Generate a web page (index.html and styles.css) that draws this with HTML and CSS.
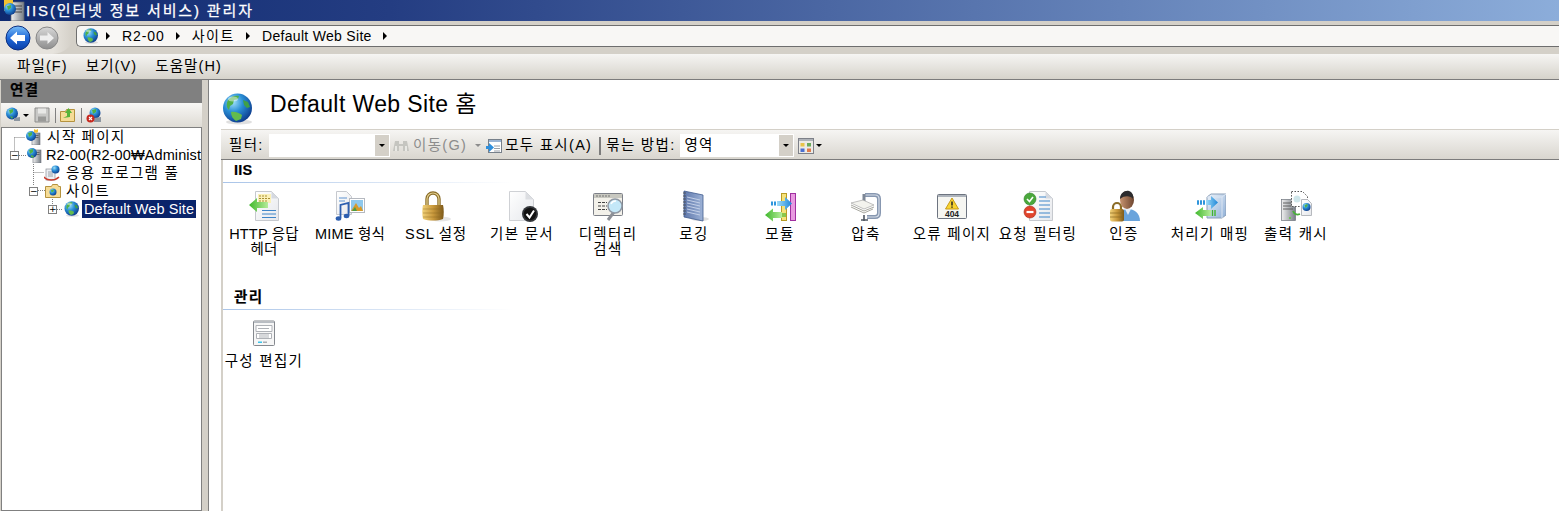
FILE: index.html
```html
<!DOCTYPE html>
<html lang="ko">
<head>
<meta charset="utf-8">
<title>IIS(인터넷 정보 서비스) 관리자</title>
<link rel="stylesheet" href="styles.css">
</head>
<body>
<svg class="defs" width="0" height="0" aria-hidden="true">
  <defs>
    <radialGradient id="gGlobe" cx="35%" cy="30%" r="75%"><stop offset="0" stop-color="#9fe0f8"/><stop offset=".45" stop-color="#2a8fd6"/><stop offset="1" stop-color="#0c3a8c"/></radialGradient>
    <linearGradient id="gPage" x1="0" y1="0" x2="1" y2="1"><stop offset="0" stop-color="#ffffff"/><stop offset="1" stop-color="#e6e8ec"/></linearGradient>
    <linearGradient id="gGold" x1="0" y1="0" x2="1" y2="0"><stop offset="0" stop-color="#f2d27a"/><stop offset=".5" stop-color="#c9993c"/><stop offset="1" stop-color="#7e5a1a"/></linearGradient>
    <linearGradient id="gBlueArrow" x1="0" y1="0" x2="1" y2="0"><stop offset="0" stop-color="#9fdcf8"/><stop offset="1" stop-color="#1d86d8"/></linearGradient>
    <linearGradient id="gGreenArrow" x1="0" y1="0" x2="1" y2="0"><stop offset="0" stop-color="#3fb82c"/><stop offset="1" stop-color="#b6ec9a"/></linearGradient>
    <linearGradient id="gBack" x1="0" y1="0" x2="0" y2="1"><stop offset="0" stop-color="#7cc0f8"/><stop offset=".5" stop-color="#1f68d8"/><stop offset="1" stop-color="#0a3ea8"/></linearGradient>
    <linearGradient id="gFwd" x1="0" y1="0" x2="0" y2="1"><stop offset="0" stop-color="#d8d8d8"/><stop offset="1" stop-color="#8e8e8e"/></linearGradient>
    <linearGradient id="gBook" x1="0" y1="0" x2="1" y2="0"><stop offset="0" stop-color="#5f78ac"/><stop offset="1" stop-color="#9db2d6"/></linearGradient>
    <linearGradient id="gBox" x1="0" y1="0" x2="1" y2="1"><stop offset="0" stop-color="#eef4fb"/><stop offset="1" stop-color="#8fb0d8"/></linearGradient>
    <linearGradient id="gServer" x1="0" y1="0" x2="1" y2="0"><stop offset="0" stop-color="#f0f0f0"/><stop offset="1" stop-color="#777e86"/></linearGradient>
    <linearGradient id="gSkin" x1="0" y1="0" x2="1" y2="0"><stop offset="0" stop-color="#c89470"/><stop offset="1" stop-color="#6e4630"/></linearGradient>

    <symbol id="i-globe" viewBox="0 0 32 32">
      <ellipse cx="17" cy="29" rx="13" ry="2.5" fill="#000" opacity=".12"/>
      <circle cx="15.500" cy="15" r="14.500" fill="url(#gGlobe)"/>
      <path d="M7 6c3-3 7-4 10-3l-1 3-4 1-1 4-3 2-1 4c-3-2-3-8 0-11z" fill="#4fb04a"/>
      <path d="M9 19c4-1 8 1 11 3l-1 4-5 2c-3-2-5-5-5-9z" fill="#63bb4d"/>
      <path d="M21 7l5 2 2 5-3 1-3-3z" fill="#3f9f48"/>
      <ellipse cx="11" cy="6" rx="5" ry="2.500" fill="#fff" opacity=".45"/>
    </symbol>
    <symbol id="i-server" viewBox="0 0 16 16">
      <rect x="7" y="3" width="8" height="13" fill="url(#gServer)" stroke="#6e747c" stroke-width=".6"/>
      <path d="M8.500 5.500h5M8.500 7.500h5" stroke="#555" stroke-width=".8"/>
      <circle cx="6" cy="6" r="5" fill="url(#gGlobe)"/>
      <path d="M3 3l4-1 0 3-3 2zM5 8l3 1-1 2-2-1z" fill="#4fb04a"/>
    </symbol>
    <symbol id="i-start" viewBox="0 0 16 16">
      <rect x="7" y="4" width="8" height="12" fill="url(#gServer)" stroke="#6e747c" stroke-width=".6"/>
      <path d="M8.500 6.500h5M8.500 8.500h5" stroke="#555" stroke-width=".8"/>
      <circle cx="6" cy="7" r="5" fill="url(#gGlobe)"/>
      <path d="M3 4l4-1 0 3-3 2z" fill="#4fb04a"/>
      <path d="M9 0l2 1 2-1v3l-2 1-2-1z" fill="#f4c430"/>
    </symbol>
    <symbol id="i-pool" viewBox="0 0 16 16">
      <rect x="2" y="4" width="9" height="11" fill="#eceff3" stroke="#8c8f96" stroke-width=".7"/>
      <path d="M4 7h5M4 9h5M4 11h5" stroke="#9aa0a8"/>
      <circle cx="11.500" cy="4.500" r="4" fill="url(#gGlobe)"/>
      <path d="M0 12c3 4 11 4 15 0" fill="none" stroke="#c93a2c" stroke-width="1.500"/>
    </symbol>
    <symbol id="i-folder" viewBox="0 0 16 16">
      <path d="M.5 3.500h6l1-2h5l1 2h2v11H.5z" fill="#f6dc96" stroke="#b5923e"/>
      <circle cx="8" cy="9" r="3.500" fill="url(#gGlobe)"/>
      <path d="M6 7l3-.5-.5 2-2 1z" fill="#4fb04a"/>
    </symbol>
    <symbol id="i-http" viewBox="0 0 32 32">
      <path d="M7.500 1.500h16l7 7v22h-23z" fill="url(#gPage)" stroke="#c6c9ce"/>
      <path d="M23.500 1.500v7h7z" fill="#d5d9e0"/>
      <rect x="10" y="4" width="13" height="9" fill="#fbf1b8"/>
      <path d="M11 6h9M11 8.500h11M11 11h8" stroke="#a99034" stroke-dasharray="2 1"/>
      <path d="M14 20.500h14M14 24h14M14 27.500h14" stroke="#3f86c9"/>
      <path d="M1 15l8-7v4h11v6H9v4z" fill="url(#gGreenArrow)"/>
    </symbol>
    <symbol id="i-mime" viewBox="0 0 32 32">
      <path d="M2.500 1.500h10l5 5v18h-15z" fill="url(#gPage)" stroke="#c6c9ce"/>
      <path d="M5 8h8M5 11h6" stroke="#5e93cf"/>
      <rect x="15.500" y="8.500" width="15" height="14" fill="#fff" stroke="#b5b9c0"/>
      <rect x="17" y="10" width="12" height="11" fill="#8ec8ec"/>
      <path d="M17 21l5-8 3 5 2-2 2 5z" fill="#d89a2a"/>
      <path d="M18 21l3-4 2 4z" fill="#4a9c44"/>
      <path d="M6.500 28V15l8-2v13" fill="none" stroke="#2d5fb0" stroke-width="1.800"/>
      <ellipse cx="4.500" cy="28.500" rx="2.800" ry="2.200" fill="#2d5fb0"/>
      <ellipse cx="12.500" cy="26" rx="2.800" ry="2.200" fill="#2d5fb0"/>
    </symbol>
    <symbol id="i-lock" viewBox="0 0 32 32">
      <ellipse cx="20" cy="29" rx="11" ry="2.500" fill="#000" opacity=".1"/>
      <g transform="translate(-3 1)">
        <path d="M10 15V8a6 6 0 0 1 12 0v7" fill="none" stroke="#8a6c28" stroke-width="3.400"/>
        <path d="M10 15V8a6 6 0 0 1 12 0v7" fill="none" stroke="#e3cf8e" stroke-width="1.200"/>
        <path d="M6 14h20c1 4 1 10 0 14-6 2-14 2-20 0-1-4-1-10 0-14z" fill="url(#gGold)"/>
        <path d="M6 18h20M6 22h20M6 26h20" stroke="#8a6820" stroke-width=".7" opacity=".6"/>
      </g>
    </symbol>
    <symbol id="i-doc" viewBox="0 0 32 32">
      <path d="M3.500 1.500h16l8 8v21h-24z" fill="url(#gPage)" stroke="#cfd1d5"/>
      <path d="M19.500 1.500v8h8z" fill="#dcdee2"/>
      <circle cx="24" cy="24" r="8" fill="#33363a"/>
      <circle cx="24" cy="24" r="6.200" fill="#111"/>
      <path d="M20.500 24l3 3.500 4.500-7" fill="none" stroke="#fff" stroke-width="2"/>
    </symbol>
    <symbol id="i-dir" viewBox="0 0 32 32">
      <rect x="1.500" y="3.500" width="29" height="22" rx="1" fill="#f3f1ea" stroke="#7d8088"/>
      <rect x="2" y="4" width="28" height="4" fill="#c8c8c0"/>
      <path d="M4 6h14" stroke="#777" stroke-dasharray="2 1"/>
      <path d="M6 12.500h9M6 16h9M6 19.500h9" stroke="#444" stroke-dasharray="3 1"/>
      <path d="M16 30l6-8" stroke="#8c8f96" stroke-width="3"/>
      <circle cx="23" cy="16" r="7" fill="#c4e8f8" stroke="#8f98a4" stroke-width="1.500"/>
      <path d="M19 14a5 5 0 0 1 5-3" fill="none" stroke="#fff" stroke-width="1.500"/>
    </symbol>
    <symbol id="i-log" viewBox="0 0 32 32">
      <ellipse cx="22" cy="29" rx="9" ry="2" fill="#000" opacity=".12"/>
      <path d="M6 1l19 4v26L6 27z" fill="url(#gBook)" stroke="#3f5a8e" stroke-width=".8"/>
      <path d="M9 7l13 3M9 10l13 3M9 13l13 3M9 16l13 3M9 19l13 3M9 22l13 3" stroke="#c9d5ea" stroke-width=".9"/>
      <path d="M5 3h3M5 6h3M5 9h3M5 12h3M5 15h3M5 18h3M5 21h3M5 24h3" stroke="#50555e" stroke-width="1.100"/>
    </symbol>
    <symbol id="i-module" viewBox="0 0 32 32">
      <rect x="17.500" y="3.500" width="5" height="27" fill="#f6e27a" stroke="#b89b24"/>
      <rect x="26.500" y="3.500" width="5" height="27" fill="#e89ae0" stroke="#a02fa0"/>
      <path d="M7 13.500h2M10 13.500h2" stroke="#2f95dc" stroke-width="4"/>
      <path d="M13 11h8V7l7 6.500-7 6.500v-4h-8z" fill="url(#gBlueArrow)"/>
      <path d="M1 25l8-6.500V22h9v6H9v3.500z" fill="url(#gGreenArrow)"/>
      <path d="M19 23v4M21 23v4" stroke="#43b52e" stroke-width="1.200"/>
    </symbol>
    <symbol id="i-clamp" viewBox="0 0 32 32">
      <path d="M15 5h10q4 0 4 4v14q0 4-4 4h-8" fill="none" stroke="#8797b0" stroke-width="4"/>
      <path d="M15 5h10q4 0 4 4v14q0 4-4 4h-8" fill="none" stroke="#d5dde8" stroke-width="1.200"/>
      <path d="M14 4v8" stroke="#7d8796" stroke-width="3"/>
      <path d="M1 13l12-3 11 5-10 4z" fill="#f3f3ee" stroke="#999" stroke-width=".6"/>
      <path d="M1 15l13 6 10-4M1 17l13 6 9-4" fill="none" stroke="#a8a8a0" stroke-width="1"/>
      <path d="M14 25l0 6M11 30h7" stroke="#4e5560" stroke-width="1.600"/>
    </symbol>
    <symbol id="i-error" viewBox="0 0 32 32">
      <rect x="1.500" y="4.500" width="29" height="24" rx="1" fill="#f6f6f2" stroke="#6d7480"/>
      <rect x="2" y="5" width="28" height="2" fill="#aeb4bc"/>
      <path d="M16 8l6.500 11h-13z" fill="#f8d430" stroke="#c69a18"/>
      <path d="M16 11.500v4M16 16.500v1.200" stroke="#222" stroke-width="1.500"/>
      <text x="16" y="27" class="svg-404">404</text>
    </symbol>
    <symbol id="i-filter" viewBox="0 0 32 32">
      <path d="M7.500 1.500h16l7 7v22h-23z" fill="url(#gPage)" stroke="#c6c9ce"/>
      <path d="M23.500 1.500v7h7z" fill="#d5d9e0"/>
      <path d="M17 7h7M17 11h11M17 15h11M17 19h11M17 23h11M17 27h11" stroke="#3f86c9"/>
      <circle cx="8" cy="9" r="6" fill="#4aa83c" stroke="#2f7f28" stroke-width=".6"/>
      <path d="M5 9l2.500 2.500L11 7" fill="none" stroke="#fff" stroke-width="1.600"/>
      <circle cx="8" cy="22" r="6" fill="#e0442c" stroke="#a62a18" stroke-width=".6"/>
      <path d="M4.500 22h7" stroke="#fff" stroke-width="2.200"/>
    </symbol>
    <symbol id="i-auth" viewBox="0 0 32 32">
      <path d="M10 31c0-8 4-12 10-12s12 4 12 12z" fill="#6aa4dc"/>
      <path d="M17 19l3 6 3-6z" fill="#e6eef8"/>
      <ellipse cx="19" cy="10" rx="7" ry="9" fill="url(#gSkin)"/>
      <path d="M12 9c0-6 5-9 9-8 3 1 5 4 4 8-2-3-8-4-13 0z" fill="#2c2c2e"/>
      <path d="M5 20v-3a4 4 0 0 1 8 0v3" fill="none" stroke="#8a6c28" stroke-width="2.200"/>
      <rect x="2" y="19" width="14" height="12.500" rx="2" fill="url(#gGold)"/>
      <path d="M2 23h14M2 27h14" stroke="#8a6820" stroke-width=".7"/>
    </symbol>
    <symbol id="i-map" viewBox="0 0 32 32">
      <path d="M13 7l4-3h15v21l-4 3H13z" fill="url(#gBox)" stroke="#8ca0b8"/>
      <path d="M28 28V7l4-3M28 7H13" fill="none" stroke="#dbe5f2"/>
      <path d="M3 12.500h2M6 12.500h2M9 12.500h2" stroke="#2f95dc" stroke-width="4.500"/>
      <path d="M12 10h5V6l7 6.500-7 6.500v-4h-5z" fill="url(#gBlueArrow)"/>
      <path d="M1 23l8-6v3h8v6H9v3z" fill="url(#gGreenArrow)"/>
      <path d="M18.500 20v6M21 20v6" stroke="#43b52e" stroke-width="1.400"/>
    </symbol>
    <symbol id="i-cache" viewBox="0 0 32 32">
      <rect x="1.500" y="9.500" width="14" height="21" fill="url(#gServer)" stroke="#6e747c" stroke-width=".7"/>
      <path d="M3 13h10M3 16h10M3 19h10" stroke="#555" stroke-width=".9"/>
      <circle cx="10" cy="28" r="1" fill="#5fce3c"/>
      <path d="M11.500 1.500h11l5 5v10h-16z" fill="#fff" stroke="#555" stroke-dasharray="1.500 1.500"/>
      <circle cx="17" cy="9" r="3.500" fill="#cfe6ea"/>
      <path d="M21.500 9.500h6l4 4v12h-10z" fill="url(#gPage)" stroke="#b6b9be"/>
      <circle cx="26.500" cy="17" r="4" fill="url(#gGlobe)"/>
      <path d="M24.500 15l3-1 0 2-2 2z" fill="#4fb04a"/>
      <path d="M13 21q2 5 7 3" fill="none" stroke="#49b03a" stroke-width="1.800"/>
    </symbol>
    <symbol id="i-config" viewBox="0 0 32 32">
      <rect x="5.500" y="4" width="21" height="24.500" rx="1" fill="#f6f6f6" stroke="#85898f"/>
      <rect x="6" y="4.500" width="20" height="1.500" fill="#b7bcc2"/>
      <path d="M8 8.500h16v6H8zM8.500 16.500h15v5h-15z" fill="#fff" stroke="#aeb1b6"/>
      <path d="M10 11.500h11M11 18h10M11 20h10" stroke="#aeb1b6"/>
      <rect x="10" y="24.500" width="4" height="1.500" fill="#3cc4ea"/>
      <rect x="15" y="24.500" width="4" height="1.500" fill="#a8acb2"/>
    </symbol>
    <symbol id="i-save" viewBox="0 0 16 16">
      <path d="M1 1h14v14H1z" fill="#c8c8c6" stroke="#8e8e8c"/>
      <rect x="4" y="1.500" width="8" height="5" fill="#e8e8e6"/>
      <rect x="4" y="9.500" width="8" height="5" fill="#9a9a98"/>
    </symbol>
    <symbol id="i-up" viewBox="0 0 16 16">
      <path d="M.5 4.500h5l1-2h8v12H.5z" fill="#f6dc96" stroke="#b5923e"/>
      <path d="M3 11l4-2V6H5l3.500-5L12 6h-2v4z" fill="#58b43a"/>
    </symbol>
    <symbol id="i-disc" viewBox="0 0 16 16">
      <circle cx="9" cy="6" r="5.500" fill="url(#gGlobe)"/>
      <path d="M6 3l4-1 0 3-3 2z" fill="#4fb04a"/>
      <path d="M8 11l7-1v5H8z" fill="#8d96a0"/>
      <circle cx="4.500" cy="11.500" r="4" fill="#c6281e"/>
      <path d="M3 10l3 3M6 10l-3 3" stroke="#fff" stroke-width="1.100"/>
    </symbol>
    <symbol id="i-connect" viewBox="0 0 16 16">
      <circle cx="7" cy="6.500" r="6" fill="url(#gGlobe)"/>
      <path d="M4 3l4-1 0 3-3 2zM5 9l3 1-1 2z" fill="#4fb04a"/>
      <path d="M9 11l6-1v4H9z" fill="#8d96a0"/>
    </symbol>
    <symbol id="i-bino" viewBox="0 0 16 16">
      <path d="M2 3h4v3h4V3h4l2 10h-6V8H6v5H0z" fill="#c5c5c0"/>
      <path d="M3 13V8M13 13V8" stroke="#e8e8e4" stroke-width="2"/>
    </symbol>
    <symbol id="i-showall" viewBox="0 0 16 16">
      <rect x="2.500" y="1.500" width="13" height="13" fill="#fff" stroke="#77808a"/>
      <rect x="3" y="2" width="12" height="2" fill="#9ab4d4"/>
      <path d="M8 8h6M8 10.500h6M8 13h6" stroke="#9aa0a8"/>
      <path d="M0 8h3V5l5 4.500L3 14v-3H0z" fill="#2f8fdc"/>
    </symbol>
    <symbol id="i-view" viewBox="0 0 16 16">
      <rect x=".5" y=".5" width="15" height="15" fill="#ecebe6" stroke="#7d8088"/>
      <rect x="1" y="1" width="14" height="2" fill="#aeb2b8"/>
      <rect x="2.500" y="5" width="4" height="3.500" fill="#e8c44a"/>
      <rect x="9" y="5" width="4" height="3.500" fill="#6aaa5c"/>
      <rect x="2.500" y="10.500" width="4" height="3.500" fill="#4a6ed0"/>
      <rect x="9" y="10.500" width="4" height="3.500" fill="#e07a4a"/>
    </symbol>
  </defs>
</svg>

<header class="titlebar">
  <svg class="title-icon" viewBox="0 0 22 21">
    <rect x="8" y="2" width="13" height="19" fill="url(#gServer)" stroke="#5e646c" stroke-width=".7"/>
    <path d="M10 6h9M10 9h9M10 12h9" stroke="#444"/>
    <rect x="1" y="0" width="9" height="11" fill="#f2c230"/>
    <circle cx="7" cy="9" r="6" fill="url(#gGlobe)"/>
    <path d="M4 6l4-1v3l-3 2z" fill="#4fb04a"/>
  </svg>
  <span class="title-text">IIS(인터넷 정보 서비스) 관리자</span>
</header>

<nav class="navbar">
  <div class="nav-buttons">
    <svg class="nav-btn" viewBox="0 0 26 26">
      <circle cx="13" cy="13" r="12" fill="url(#gBack)" stroke="#0c2f80"/>
      <path d="M5 13l7-6.500V10h8v6h-8v3.500z" fill="#fff"/>
    </svg>
    <svg class="nav-btn nav-btn-off" viewBox="0 0 24 24">
      <circle cx="12" cy="12" r="11" fill="url(#gFwd)" stroke="#888"/>
      <path d="M19 12l-6.500-6V9.500H5v5h7.500V18z" fill="#eee"/>
    </svg>
  </div>
  <div class="address">
    <svg class="addr-globe"><use href="#i-globe"/></svg>
    <span class="crumb-arrow"></span>
    <span class="crumb crumb-host">R2-00</span>
    <span class="crumb-arrow"></span>
    <span class="crumb ko">사이트</span>
    <span class="crumb-arrow"></span>
    <span class="crumb">Default Web Site</span>
    <span class="crumb-arrow"></span>
  </div>
</nav>

<div class="menubar">
  <span class="menu-item">파일(F)</span>
  <span class="menu-item">보기(V)</span>
  <span class="menu-item">도움말(H)</span>
</div>

<main class="workspace">
  <aside class="connections">
    <div class="conn-head ko">연결</div>
    <div class="conn-tools">
      <svg class="tool"><use href="#i-connect"/></svg>
      <span class="caret caret-small"></span>
      <svg class="tool"><use href="#i-save"/></svg>
      <span class="tool-sep"></span>
      <svg class="tool"><use href="#i-up"/></svg>
      <span class="tool-sep"></span>
      <svg class="tool"><use href="#i-disc"/></svg>
    </div>
    <div class="tree">
      <svg class="tree-lines" width="80" height="100">
        <path d="M14.500 9.500v13M14.500 9.500H25M19 27.500h7M33.500 32v26M33.500 44.500H44M38 62.500h7M52.500 67v9M57 81.500h6" fill="none" stroke="#808080" stroke-dasharray="1 1"/>
      </svg>
      <div class="row row-start"><svg class="tree-icon"><use href="#i-start"/></svg><span class="ko">시작 페이지</span></div>
      <div class="row row-l0"><span class="exp">−</span><svg class="tree-icon"><use href="#i-server"/></svg><span class="clip">R2-00(R2-00₩Administrator)</span></div>
      <div class="row row-pool"><svg class="tree-icon"><use href="#i-pool"/></svg><span class="ko">응용 프로그램 풀</span></div>
      <div class="row row-l1"><span class="exp">−</span><svg class="tree-icon"><use href="#i-folder"/></svg><span class="ko">사이트</span></div>
      <div class="row row-l2"><span class="exp exp-plus">+</span><svg class="tree-icon"><use href="#i-globe"/></svg><span class="selected">Default Web Site</span></div>
    </div>
  </aside>

  <section class="content">
    <div class="page-head">
      <svg class="page-globe"><use href="#i-globe"/></svg>
      <h1 class="page-title">Default Web Site 홈</h1>
    </div>
    <div class="filterbar">
      <span class="fb-label ko">필터:</span>
      <span class="combo combo-filter"><span class="combo-val"></span><span class="combo-btn"><span class="caret"></span></span></span>
      <svg class="fb-icon"><use href="#i-bino"/></svg>
      <span class="fb-go ko">이동(G)</span>
      <span class="caret caret-dim"></span>
      <svg class="fb-icon fb-showall"><use href="#i-showall"/></svg>
      <span class="fb-text ko">모두 표시(A)</span>
      <span class="fb-sep"></span>
      <span class="fb-text ko">묶는 방법:</span>
      <span class="combo combo-group"><span class="combo-val ko">영역</span><span class="combo-btn"><span class="caret"></span></span></span>
      <svg class="fb-icon fb-view"><use href="#i-view"/></svg>
      <span class="caret caret-small"></span>
    </div>
    <div class="features">
      <h2 class="group-title">IIS</h2>
      <div class="group-rule"></div>
      <div class="items items-iis">
        <div class="item"><svg class="item-icon"><use href="#i-http"/></svg><span>HTTP 응답 헤더</span></div>
        <div class="item"><svg class="item-icon"><use href="#i-mime"/></svg><span>MIME 형식</span></div>
        <div class="item"><svg class="item-icon"><use href="#i-lock"/></svg><span class="mix">SSL 설정</span></div>
        <div class="item"><svg class="item-icon"><use href="#i-doc"/></svg><span class="ko">기본 문서</span></div>
        <div class="item"><svg class="item-icon"><use href="#i-dir"/></svg><span class="ko">디렉터리 검색</span></div>
        <div class="item"><svg class="item-icon"><use href="#i-log"/></svg><span class="ko">로깅</span></div>
        <div class="item"><svg class="item-icon"><use href="#i-module"/></svg><span class="ko">모듈</span></div>
        <div class="item"><svg class="item-icon"><use href="#i-clamp"/></svg><span class="ko">압축</span></div>
        <div class="item"><svg class="item-icon"><use href="#i-error"/></svg><span class="ko">오류 페이지</span></div>
        <div class="item"><svg class="item-icon"><use href="#i-filter"/></svg><span class="ko">요청 필터링</span></div>
        <div class="item"><svg class="item-icon"><use href="#i-auth"/></svg><span class="ko">인증</span></div>
        <div class="item"><svg class="item-icon"><use href="#i-map"/></svg><span class="ko">처리기 매핑</span></div>
        <div class="item"><svg class="item-icon"><use href="#i-cache"/></svg><span class="ko">출력 캐시</span></div>
      </div>
      <h2 class="group-title ko">관리</h2>
      <div class="group-rule"></div>
      <div class="items">
        <div class="item"><svg class="item-icon"><use href="#i-config"/></svg><span class="ko">구성 편집기</span></div>
      </div>
    </div>
  </section>
</main>
</body>
</html>
```

FILE: styles.css
```css
* { box-sizing: border-box; }
html, body { margin: 0; padding: 0; }
body {
  width: 1559px;
  height: 511px;
  overflow: hidden;
  display: flex;
  flex-direction: column;
  background: #d4d0c8;
  color: #000;
  font: 14.5px/15px "Liberation Sans", "Noto Sans CJK KR", sans-serif;
  letter-spacing: .2px;
}
.defs { position: absolute; }
.ko { letter-spacing: 1.3px; }
.mix { letter-spacing: .7px; }

.titlebar {
  height: 21px;
  flex: none;
  display: flex;
  align-items: center;
  background: linear-gradient(90deg, #0f2a70 0%, #243d82 25%, #8cadda 100%);
}
.title-icon { width: 22px; height: 21px; margin-left: 3px; flex: none; }
.title-text { margin-left: 1px; color: #fff; font-size: 15px; letter-spacing: 1.85px; -webkit-text-stroke: .25px #fff; }

.navbar { height: 33px; flex: none; padding: 4px 0 7px; display: flex; }
.nav-buttons {
  width: 76px;
  flex: none;
  display: flex;
  align-items: center;
  padding-left: 5px;
  gap: 4px;
  margin: -4px 0 -7px;
  background: linear-gradient(90deg, #e6e3dd 70%, #d4d0c8 95%);
  border-radius: 0 0 24px 0;
}
.nav-btn { width: 26px; height: 26px; flex: none; }
.nav-btn-off { width: 24px; height: 24px; }
.address {
  flex: 1;
  display: flex;
  align-items: center;
  padding-left: 6px;
  background: #f8f7f5;
  border: 1px solid #6e6e6e;
  border-right: 0;
  border-radius: 5px 0 0 5px;
}
.addr-globe { width: 16px; height: 16px; flex: none; margin-right: 7px; }
.crumb-arrow {
  width: 0; height: 0; flex: none;
  border-left: 4px solid #000;
  border-top: 4px solid transparent;
  border-bottom: 4px solid transparent;
}
.crumb { margin: 0 11px 0 12px; font-size: 14px; letter-spacing: .3px; }
.crumb-host { letter-spacing: .9px; }
.crumb.ko { letter-spacing: 1.6px; }

.menubar {
  height: 26px;
  flex: none;
  display: flex;
  align-items: center;
  gap: 18px;
  padding-left: 17px;
  letter-spacing: 1.1px;
  background: linear-gradient(#f6f5f3, #d6d3cb);
  border-bottom: 1px solid #7c7c7c;
}

.workspace { flex: 1; min-height: 0; display: flex; }

.connections {
  width: 201px;
  margin-left: 1px;
  flex: none;
  display: flex;
  flex-direction: column;
}
.conn-head { height: 24px; padding: 4px 0 0 9px; background: #808080; font-weight: bold; -webkit-text-stroke: .2px #000; margin-top: -1px; }
.conn-tools {
  height: 24px;
  flex: none;
  display: flex;
  align-items: center;
  padding-left: 4px;
  background: linear-gradient(#f8f7f5, #dedbd4);
}
.tool { width: 16px; height: 16px; flex: none; }
.caret {
  display: inline-block;
  width: 0; height: 0; flex: none;
  border-top: 3px solid #000;
  border-left: 3px solid transparent;
  border-right: 3px solid transparent;
}
.caret-small { margin: 0 5px 0 2px; }
.caret-dim { border-top-color: #8c8c8c; margin: 0 5px 0 8px; }
.tool-sep { width: 1px; height: 15px; background: #808080; margin: 0 4px 0 5px; flex: none; }

.tree {
  position: relative;
  flex: 1;
  background: #fff;
  border: 1px solid #808080;
  overflow: hidden;
}
.tree-lines { position: absolute; left: -2px; top: 0; }
.row { position: relative; height: 18px; display: flex; align-items: center; white-space: nowrap; }
.row-start { padding-left: 23px; }
.row-l0 { padding-left: 8px; }
.row-pool { padding-left: 42px; }
.row-l1 { padding-left: 27px; }
.row-l2 { padding-left: 46px; }
.tree-icon { width: 16px; height: 16px; flex: none; margin-right: 6px; }
.row-l0 .tree-icon { margin-right: 4px; }
.row-l1 .tree-icon { margin-right: 5px; }
.row-l2 .tree-icon { margin-right: 3px; }
.exp {
  width: 9px; height: 9px; flex: none;
  margin-right: 7px;
  border: 1px solid #808080;
  background: #fff;
  font: 9px/6px "DejaVu Sans", sans-serif;
  letter-spacing: 0;
  text-align: center;
  color: #000;
}
.clip { overflow: hidden; letter-spacing: .1px; }
.selected { background: #0a246a; color: #fff; padding: 2px 2px 1px 2px; letter-spacing: .1px; margin-left: -1px; }

.content { flex: 1; min-width: 0; display: flex; flex-direction: column; margin-left: 6px; background: #fff; border-left: 1px solid #808080; padding-left: 12px; }
.page-head { height: 49px; flex: none; display: flex; align-items: center; padding-left: 1px; }
.page-globe { width: 32px; height: 32px; flex: none; margin-top: 8px; }
.page-title { margin: 0 0 2px 16px; font-size: 23px; font-weight: normal; line-height: 30px; letter-spacing: .4px; }

.filterbar {
  height: 31px;
  flex: none;
  display: flex;
  align-items: center;
  padding: 2px 0 0 8px;
  background: linear-gradient(#f6f5f3, #d9d6cf);
  border-top: 1px solid #d4d0c8;
  border-bottom: 1px solid #7c7c7c;
}
.fb-label { width: 40px; flex: none; }
.combo { height: 23px; display: flex; background: #fff; flex: none; padding: 1px; }
.combo-filter { width: 121px; }
.combo-group { width: 114px; margin-left: 5px; }
.combo-val { flex: 1; padding: 3px 0 0 3px; }
.combo-btn { width: 14px; background: #d4d0c8; display: flex; align-items: center; justify-content: center; }
.fb-icon { width: 16px; height: 16px; flex: none; margin-left: 3px; }
.fb-go { color: #8c8c8c; margin-left: 4px; }
.fb-showall { margin-left: 0; }
.fb-text { margin-left: 3px; flex: none; }
.fb-sep { width: 2px; height: 18px; background: #7c7c7c; margin: 0 2px 0 7px; flex: none; }
.fb-view { margin-left: 4px; }
.filterbar > .caret-small { margin-left: 2px; }

.features { flex: 1; border-left: 2px solid #d4d0c8; padding-top: 1px; }
.group-title { margin: 0; padding: 0 0 0 11px; height: 21px; font-size: 14.5px; line-height: 18px; -webkit-text-stroke: .2px #000; }
.group-rule { height: 1px; width: 290px; background: linear-gradient(90deg, #a9c4e8, #fff); }
.items { display: flex; padding-top: 7px; margin-left: -2px; }
.items-iis { height: 105px; }
.item { width: 86px; flex: none; display: flex; flex-direction: column; align-items: center; text-align: center; padding: 0 3px; word-break: keep-all; }
.item-icon { width: 32px; height: 32px; flex: none; margin-bottom: 5px; }
.svg-404 { font: bold 8.5px "Liberation Sans", sans-serif; letter-spacing: 0; text-anchor: middle; fill: #222; }
```
